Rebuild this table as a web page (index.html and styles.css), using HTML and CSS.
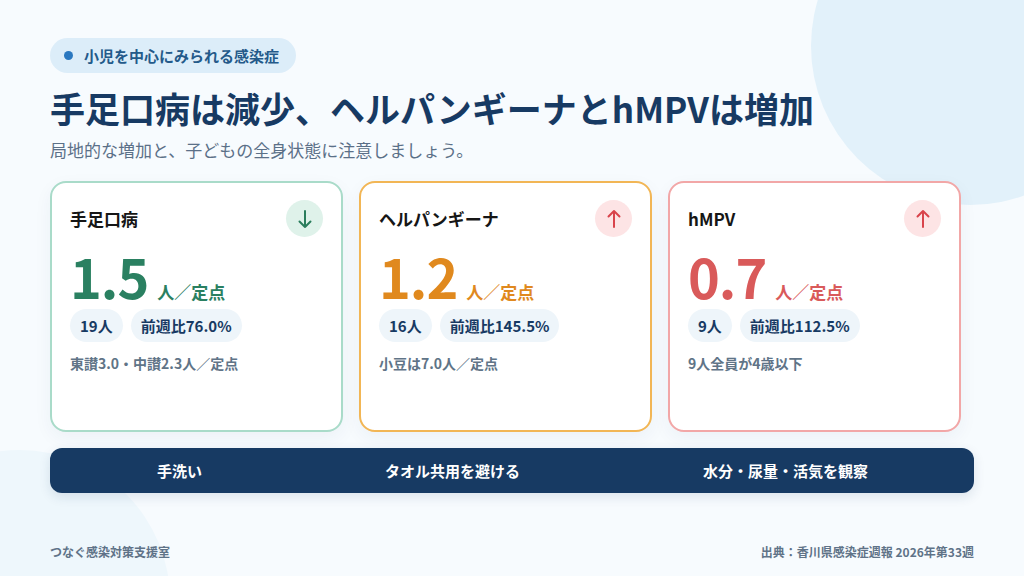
FILE: index.html
```html
<!DOCTYPE html>
<html lang="ja">
<head>
<meta charset="utf-8">
<title>感染症週報</title>
<link rel="stylesheet" href="styles.css">
</head>
<body>
<div class="page">
  <div class="blob blob-tr"></div>
  <div class="blob blob-bl"></div>
  <div class="content">
    <div class="badge"><span class="dot"></span>小児を中心にみられる感染症</div>
    <h1 class="title">手足口病は減少、ヘルパンギーナとhMPVは増加</h1>
    <p class="subtitle">局地的な増加と、子どもの全身状態に注意しましょう。</p>
    <div class="cards">
      <div class="card card-green">
        <div class="card-head">
          <span class="card-name">手足口病</span>
          <span class="icon icon-down">
            <svg viewBox="0 0 20 20" width="20" height="20"><path d="M10 2V18M4.5 12.5L10 18L15.5 12.5" fill="none" stroke="currentColor" stroke-width="2" stroke-linecap="round" stroke-linejoin="round"/></svg>
          </span>
        </div>
        <div class="value"><span class="num">1.5</span><span class="unit">人／定点</span></div>
        <div class="pills"><span class="pill">19人</span><span class="pill">前週比76.0%</span></div>
        <p class="note">東讃3.0・中讃2.3人／定点</p>
      </div>
      <div class="card card-orange">
        <div class="card-head">
          <span class="card-name">ヘルパンギーナ</span>
          <span class="icon icon-up">
            <svg viewBox="0 0 20 20" width="20" height="20"><path d="M10 18V2M4.5 7.5L10 2L15.5 7.5" fill="none" stroke="currentColor" stroke-width="2" stroke-linecap="round" stroke-linejoin="round"/></svg>
          </span>
        </div>
        <div class="value"><span class="num">1.2</span><span class="unit">人／定点</span></div>
        <div class="pills"><span class="pill">16人</span><span class="pill">前週比145.5%</span></div>
        <p class="note">小豆は7.0人／定点</p>
      </div>
      <div class="card card-red">
        <div class="card-head">
          <span class="card-name">hMPV</span>
          <span class="icon icon-up">
            <svg viewBox="0 0 20 20" width="20" height="20"><path d="M10 18V2M4.5 7.5L10 2L15.5 7.5" fill="none" stroke="currentColor" stroke-width="2" stroke-linecap="round" stroke-linejoin="round"/></svg>
          </span>
        </div>
        <div class="value"><span class="num">0.7</span><span class="unit">人／定点</span></div>
        <div class="pills"><span class="pill">9人</span><span class="pill">前週比112.5%</span></div>
        <p class="note">9人全員が4歳以下</p>
      </div>
    </div>
    <div class="actions">
      <span>手洗い</span>
      <span>タオル共用を避ける</span>
      <span>水分・尿量・活気を観察</span>
    </div>
    <div class="footer">
      <span>つなぐ感染対策支援室</span>
      <span>出典：香川県感染症週報 2026年第33週</span>
    </div>
  </div>
</div>
</body>
</html>
```
FILE: styles.css
```css
* { box-sizing: border-box; }
html, body {
  margin: 0;
  padding: 0;
}
body {
  width: 1024px;
  height: 576px;
  overflow: hidden;
  background: #f7fbfe;
  font-family: "Noto Sans CJK JP", "Noto Sans", sans-serif;
}
.page {
  position: relative;
  width: 1024px;
  height: 576px;
  overflow: hidden;
}
.blob {
  position: absolute;
  border-radius: 50%;
}
.blob-tr {
  left: 811px;
  top: -113px;
  width: 318px;
  height: 318px;
  background: #e2f1fa;
}
.blob-bl {
  left: -130px;
  top: 450px;
  width: 300px;
  height: 300px;
  background: #eef7fc;
}
.content {
  position: relative;
  height: 576px;
  padding: 38px 50px 16px 50px;
  display: flex;
  flex-direction: column;
}
.badge {
  align-self: flex-start;
  display: flex;
  align-items: center;
  height: 35px;
  padding: 0 17px 0 14px;
  border-radius: 18px;
  background: #dcedf9;
  color: #245a8a;
  font-size: 15px;
  font-weight: 700;
}
.dot {
  width: 9px;
  height: 9px;
  border-radius: 50%;
  background: #2a78c0;
  margin-right: 11px;
}
.title {
  margin: 12px 0 0 0;
  font-size: 35px;
  line-height: 46px;
  font-weight: 700;
  color: #173a63;
  letter-spacing: 0;
}
.subtitle {
  margin: 7px 0 0 0;
  font-size: 17px;
  line-height: 24px;
  color: #5b7088;
}
.cards {
  margin-top: 19px;
  display: grid;
  grid-template-columns: repeat(3, 293px);
  gap: 16px;
}
.card {
  height: 251px;
  background: #ffffff;
  border: 2px solid #a9dbc9;
  border-radius: 16px;
  padding: 17px 18px;
  box-shadow: 0 6px 18px rgba(30, 60, 100, 0.05);
}
.card-orange { border-color: #f2b655; }
.card-red { border-color: #f2a7a7; }
.card-head {
  display: flex;
  justify-content: space-between;
  align-items: center;
  height: 37px;
}
.card-name {
  font-size: 17px;
  font-weight: 700;
  color: #161616;
}
.icon {
  width: 37px;
  height: 37px;
  border-radius: 50%;
  display: flex;
  align-items: center;
  justify-content: center;
}
.icon-down { background: #dff2ea; color: #2a7d5c; }
.icon-up { background: #fde4e5; color: #d9434b; }
.value {
  margin-top: 9px;
  display: flex;
  align-items: baseline;
}
.num {
  font-size: 54px;
  line-height: 60px;
  font-weight: 700;
  letter-spacing: -1px;
}
.unit {
  margin-left: 9px;
  font-size: 17px;
  font-weight: 700;
}
.card-green .value { color: #2a8061; }
.card-orange .value { color: #e0891e; }
.card-red .value { color: #d95a5a; }
.pills {
  margin-top: 3px;
  display: flex;
  gap: 8px;
}
.pill {
  height: 33px;
  display: flex;
  align-items: center;
  padding: 0 10px;
  border-radius: 17px;
  background: #eef5fa;
  color: #173a63;
  font-size: 15px;
  font-weight: 700;
}
.note {
  margin: 11px 0 0 0;
  font-size: 14px;
  line-height: 20px;
  font-weight: 700;
  color: #607487;
}
.actions {
  margin-top: 16px;
  height: 45px;
  border-radius: 12px;
  background: #173a63;
  display: flex;
  justify-content: space-between;
  align-items: center;
  padding: 0 106px 0 107px;
  color: #ffffff;
  font-size: 15px;
  font-weight: 700;
  box-shadow: 0 4px 12px rgba(23, 58, 99, 0.12);
}
.footer {
  margin-top: auto;
  display: flex;
  justify-content: space-between;
  font-size: 12px;
  line-height: 17px;
  font-weight: 700;
  color: #5f7388;
}
```
